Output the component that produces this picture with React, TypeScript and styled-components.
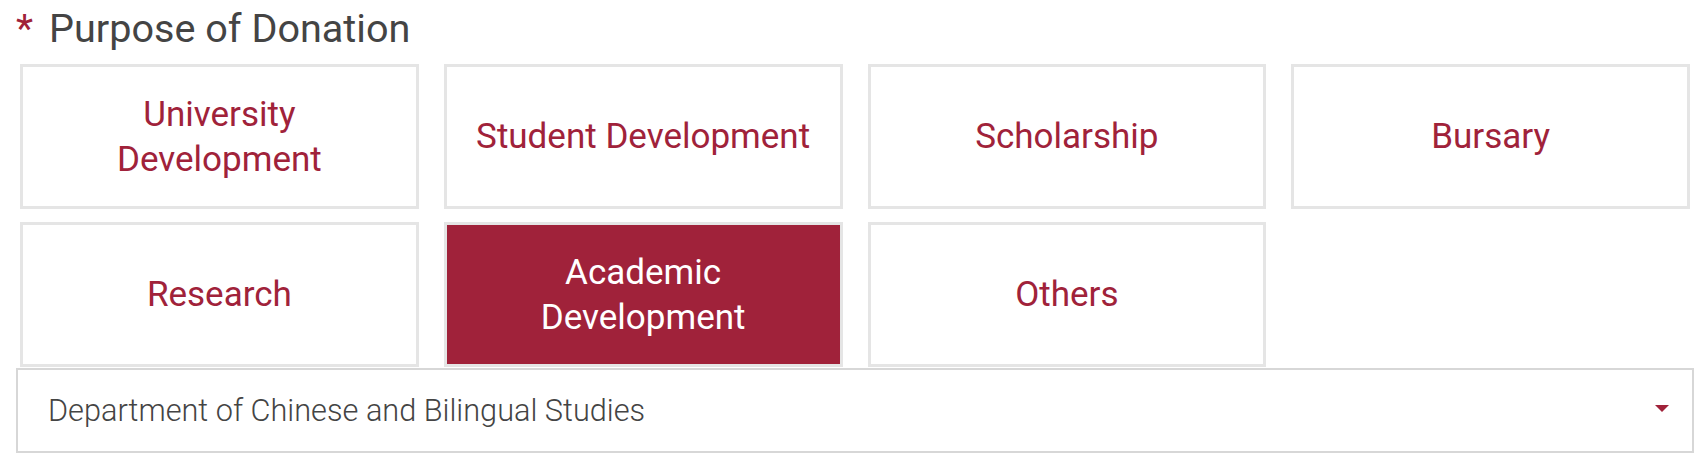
import React, { useState } from "react";
import styled, { createGlobalStyle } from "styled-components";

const RED = "#a0223a";

const GlobalStyle = createGlobalStyle`
  html, body {
    margin: 0;
    padding: 0;
    background: #ffffff;
    font-family: Roboto, "Liberation Sans", Arial, sans-serif;
  }
  * {
    box-sizing: border-box;
  }
`;

const purposes = [
  "University Development",
  "Student Development",
  "Scholarship",
  "Bursary",
  "Research",
  "Academic Development",
  "Others",
];

const App = () => {
  const [selected, setSelected] = useState("Academic Development");

  return (
    <>
      <GlobalStyle />
      <Wrapper>
        <Title>
          <Required>*</Required>
          Purpose of Donation
        </Title>
        <OptionGrid>
          {purposes.map((item) => (
            <OptionBox
              key={item}
              type="button"
              active={item === selected}
              onClick={() => setSelected(item)}
            >
              {item}
            </OptionBox>
          ))}
        </OptionGrid>
        <SelectBox>
          <SelectText>Department of Chinese and Bilingual Studies</SelectText>
          <Caret viewBox="0 0 14 7">
            <polygon points="0,0 14,0 7,7" />
          </Caret>
        </SelectBox>
      </Wrapper>
    </>
  );
};

const Wrapper = styled.div`
  width: 1678px;
  margin-left: 16px;
  padding-top: 5px;
`;

const Title = styled.div`
  display: flex;
  align-items: center;
  font-size: 39.6px;
  line-height: 48px;
  font-weight: 400;
  color: #444444;
  margin-bottom: 11px;
`;

const Required = styled.span`
  color: ${RED};
  margin-right: 16px;
`;

const OptionGrid = styled.div`
  display: grid;
  grid-template-columns: repeat(4, 1fr);
  gap: 13px 25px;
  padding: 0 4px;
  margin-bottom: 1px;
`;

const OptionBox = styled.button<{ active?: boolean }>`
  height: 145px;
  display: flex;
  align-items: center;
  justify-content: center;
  padding: 0 20px;
  margin: 0;
  border: 3px solid #e5e5e5;
  background: ${(props) => (props.active ? RED : "#ffffff")};
  color: ${(props) => (props.active ? "#ffffff" : RED)};
  font-family: Roboto, "Liberation Sans", Arial, sans-serif;
  font-size: 35px;
  line-height: 45px;
  font-weight: 400;
  text-align: center;
  cursor: pointer;
  outline: none;
`;

const SelectBox = styled.div`
  height: 85px;
  display: flex;
  align-items: center;
  justify-content: space-between;
  padding: 0 23px 0 30px;
  border: 2px solid #d7d7d7;
  background: #ffffff;
  cursor: pointer;
`;

const SelectText = styled.span`
  font-size: 30.7px;
  font-weight: 300;
  color: #444444;
`;

const Caret = styled.svg`
  width: 14px;
  height: 7px;
  margin-top: -4px;
  fill: ${RED};
`;

export default App;
